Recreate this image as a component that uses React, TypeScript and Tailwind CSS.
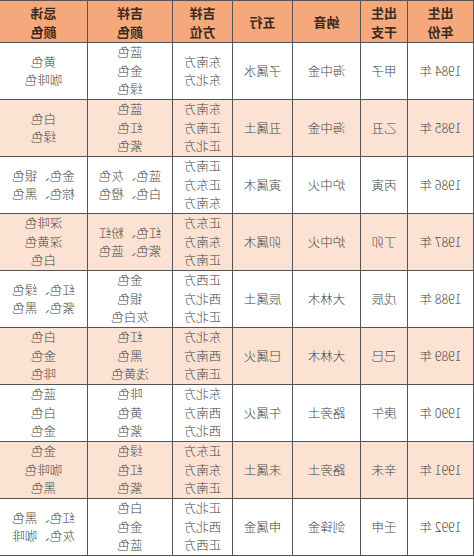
import React from 'react';

type Row = {
    year: string;
    ganzhi: string;
    nayin: string;
    wuxing: string;
    fangwei: string[];
    luckColors: string[];
    badColors: string[];
};

const rows: Row[] = [
    { year: '1984 年', ganzhi: '甲子', nayin: '海中金', wuxing: '子属水', fangwei: ['东南方', '东北方'], luckColors: ['蓝色', '金色', '绿色'], badColors: ['黄色', '咖啡色'] },
    { year: '1985 年', ganzhi: '乙丑', nayin: '海中金', wuxing: '丑属土', fangwei: ['东南方', '正南方', '正北方'], luckColors: ['蓝色', '红色', '紫色'], badColors: ['白色', '绿色'] },
    { year: '1986 年', ganzhi: '丙寅', nayin: '炉中火', wuxing: '寅属木', fangwei: ['正南方', '正东方', '东南方'], luckColors: ['蓝色、灰色', '白色、橙色'], badColors: ['金色、银色', '棕色、黑色'] },
    { year: '1987 年', ganzhi: '丁卯', nayin: '炉中火', wuxing: '卯属木', fangwei: ['正东方', '东南方', '正南方'], luckColors: ['红色、粉红', '紫色、蓝色'], badColors: ['深啡色', '深黄色', '白色'] },
    { year: '1988 年', ganzhi: '戊辰', nayin: '大林木', wuxing: '辰属土', fangwei: ['正西方', '西北方', '正北方'], luckColors: ['金色', '银色', '灰白色'], badColors: ['红色、绿色', '紫色、黑色'] },
    { year: '1989 年', ganzhi: '己巳', nayin: '大林木', wuxing: '巳属火', fangwei: ['东北方', '西南方', '正南方'], luckColors: ['红色', '黑色', '浅黄色'], badColors: ['白色', '金色', '啡色'] },
    { year: '1990 年', ganzhi: '庚午', nayin: '路旁土', wuxing: '午属火', fangwei: ['东北方', '西南方', '西北方'], luckColors: ['啡色', '黄色', '紫色'], badColors: ['蓝色', '白色', '金色'] },
    { year: '1991 年', ganzhi: '辛未', nayin: '路旁土', wuxing: '未属土', fangwei: ['正东方', '东南方', '正南方'], luckColors: ['绿色', '红色', '紫色'], badColors: ['金色', '咖啡色', '黑色'] },
    { year: '1992 年', ganzhi: '壬申', nayin: '剑锋金', wuxing: '申属金', fangwei: ['正北方', '西北方', '正西方'], luckColors: ['白色', '金色', '蓝色'], badColors: ['红色、黑色', '灰色、咖啡'] },
];

const headers = [['出生', '年份'], ['出生', '干支'], ['纳音'], ['五行'], ['吉祥', '方位'], ['吉祥', '颜色'], ['忌讳', '颜色']];
const widths = ['w-[66px]', 'w-[47px]', 'w-[68px]', 'w-[60px]', 'w-[60px]', 'w-[85px]', 'w-[88px]'];

const Lines = ({ items }: { items: string[] }) => (
    <>
        {items.map((t, i) => (
            <div key={i}>{t}</div>
        ))}
    </>
);

export default function App() {
    return (
        <div className="w-[474px] h-[557px] bg-white overflow-hidden">
            {/* the screenshot is mirrored left-to-right */}
            <div className="-scale-x-100 origin-center">
                <table
                    className="w-[474px] border-collapse table-fixed text-[#444] text-[12.5px] leading-[18.5px] font-light"
                    style={{ fontFamily: '"Noto Sans CJK SC", "DejaVu Sans", sans-serif' }}
                >
                    <colgroup>
                        {widths.map((w, i) => (
                            <col key={i} className={w} />
                        ))}
                    </colgroup>
                    <thead>
                        <tr className="h-[42px] bg-[#f4a87c]">
                            {headers.map((h, i) => (
                                <th key={i} className="border border-[#555] font-bold text-center align-middle text-[#3a2a20] text-[13px] leading-[19px]">
                                    <Lines items={h} />
                                </th>
                            ))}
                        </tr>
                    </thead>
                    <tbody>
                        {rows.map((r, i) => (
                            <tr key={r.year} className={`h-[57px] ${i % 2 === 1 ? 'bg-[#fbe2d3]' : 'bg-white'}`}>
                                <td className="border border-[#555] text-center">{r.year}</td>
                                <td className="border border-[#555] text-center">{r.ganzhi}</td>
                                <td className="border border-[#555] text-center">{r.nayin}</td>
                                <td className="border border-[#555] text-center">{r.wuxing}</td>
                                <td className="border border-[#555] text-center"><Lines items={r.fangwei} /></td>
                                <td className="border border-[#555] text-center"><Lines items={r.luckColors} /></td>
                                <td className="border border-[#555] text-center"><Lines items={r.badColors} /></td>
                            </tr>
                        ))}
                    </tbody>
                </table>
            </div>
        </div>
    );
}
